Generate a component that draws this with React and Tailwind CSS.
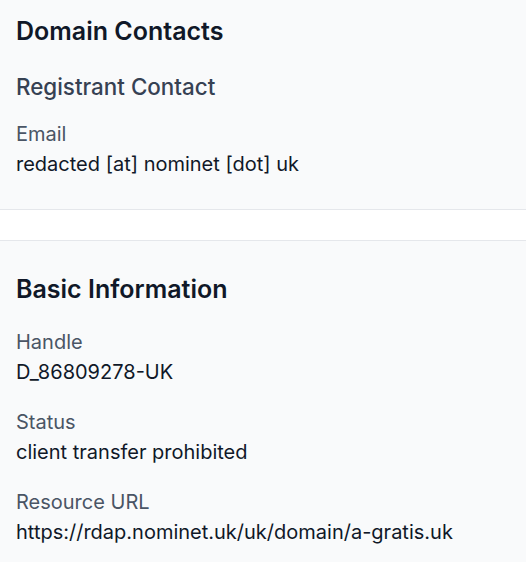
import React from 'react';

const Field = ({ label, value }) => (
  <div>
    <div className="text-xl text-gray-600">{label}</div>
    <div className="mt-0.5 text-xl text-gray-900">{value}</div>
  </div>
);

const App = () => {
  return (
    <div className="min-h-screen bg-white font-['Inter','Liberation_Sans',sans-serif]">
      {/* Domain Contacts */}
      <section className="bg-gray-50 border-b border-gray-200 px-4 pt-[15px] pb-[31px]">
        <h2 className="text-[25px] leading-8 font-semibold text-gray-900 mb-[26px]">Domain Contacts</h2>
        <h3 className="text-[22.4px] leading-7 font-medium text-gray-700 mb-[19px]">Registrant Contact</h3>
        <Field label="Email" value="redacted [at] nominet [dot] uk" />
      </section>

      {/* Basic Information */}
      <section className="mt-[30px] bg-gray-50 border-t border-gray-200 px-4 py-8">
        <h2 className="text-[25px] leading-8 font-semibold text-gray-900 mb-[23px]">Basic Information</h2>
        <div className="space-y-[22px]">
          <Field label="Handle" value="D_86809278-UK" />
          <Field label="Status" value="client transfer prohibited" />
          <Field label="Resource URL" value="https://rdap.nominet.uk/uk/domain/a-gratis.uk" />
        </div>
      </section>
    </div>
  );
};

export default App;
